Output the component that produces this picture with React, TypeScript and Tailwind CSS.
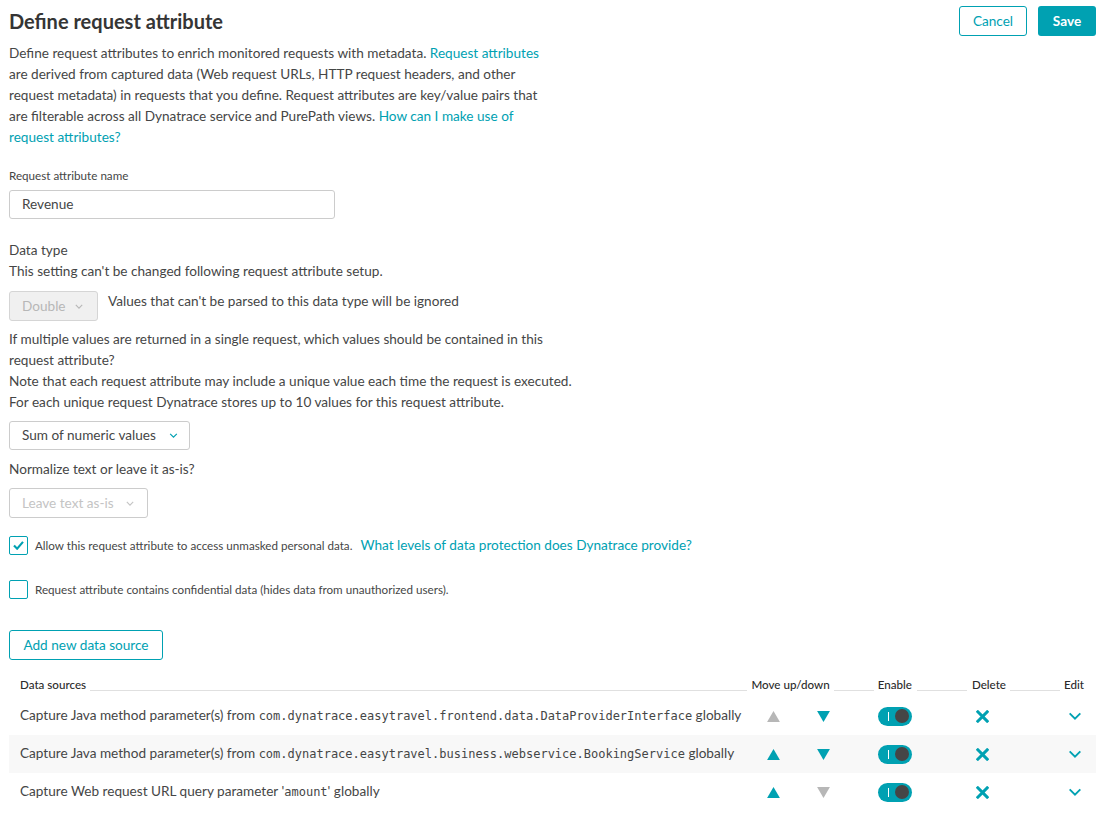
import React from "react";

const teal = "#00a1b2";

function Chevron({ className = "" }: { className?: string }) {
  return (
    <svg viewBox="0 0 10 6" className={className} fill="none" stroke="currentColor" strokeWidth="1.4">
      <path d="M1 1l4 4 4-4" />
    </svg>
  );
}

function Triangle({ up, active }: { up: boolean; active: boolean }) {
  return (
    <svg viewBox="0 0 14 12" className="w-[13px] h-[11px]">
      <path d={up ? "M7 0L14 12H0z" : "M0 0h14L7 12z"} fill={active ? teal : "#b7b7b7"} />
    </svg>
  );
}

function Toggle() {
  return (
    <div className="w-[34px] h-[19px] rounded-full bg-[#00a1b2] flex items-center justify-between pl-[10px] pr-[3px]">
      <span className="w-px h-[9px] bg-white" />
      <span className="w-[14px] h-[14px] rounded-full bg-[#454646]" />
    </div>
  );
}

function Cross() {
  return (
    <svg viewBox="0 0 14 14" className="w-[13px] h-[13px]">
      <path d="M2 2l10 10M12 2L2 12" stroke={teal} strokeWidth="3.2" strokeLinecap="square" />
    </svg>
  );
}

type Row = { pre: string; code: string; post: string };

const rows: Row[] = [
  { pre: "Capture Java method parameter(s) from ", code: "com.dynatrace.easytravel.frontend.data.DataProviderInterface", post: " globally" },
  { pre: "Capture Java method parameter(s) from ", code: "com.dynatrace.easytravel.business.webservice.BookingService", post: " globally" },
  { pre: "Capture Web request URL query parameter '", code: "amount", post: "' globally" },
];

const moves = [
  [false, true],
  [true, true],
  [true, false],
];

export default function App() {
  return (
    <div className="min-h-screen bg-white text-[#454646] text-[13.6px] leading-[21px] pl-[9px] pr-[13px]" style={{ fontFamily: "Lato, 'Open Sans', sans-serif" }}>
      <div className="flex items-start justify-between pt-[6px]">
        <h1 className="text-[20px] font-bold leading-[30px] text-[#353535]">Define request attribute</h1>
        <div className="flex gap-[11px]">
          <button className="h-[30px] w-[68px] rounded-[3px] border border-[#00a1b2] text-[#00a1b2]">Cancel</button>
          <button className="h-[30px] w-[58px] rounded-[3px] bg-[#00a1b2] text-white font-bold">Save</button>
        </div>
      </div>

      <p className="mt-[7px] w-[548px]">
        Define request attributes to enrich monitored requests with metadata.{" "}
        <span className="text-[#00a1b2]">Request attributes</span> are derived from captured data (Web request URLs, HTTP request headers, and other request metadata) in requests that you define. Request attributes are key/value pairs that are filterable across all Dynatrace service and PurePath views.{" "}
        <span className="text-[#00a1b2]">How can I make use of request attributes?</span>
      </p>

      <div className="mt-[20px] text-[11.65px] leading-[16px]">Request attribute name</div>
      <div className="mt-[6px] w-[326px] h-[29px] rounded-[3px] border border-[#cccccc] flex items-center px-[12px]">Revenue</div>

      <div className="mt-[21px]">Data type</div>
      <div>This setting can't be changed following request attribute setup.</div>
      <div className="mt-[9px] flex items-start gap-[10px]">
        <div className="w-[89px] h-[30px] rounded-[3px] border border-[#d5d5d5] bg-[#f0f0f0] flex items-center gap-[9px] pl-[12px] text-[#b7b7b7]">
          Double <Chevron className="w-[8px] h-[5px] text-[#b7b7b7]" />
        </div>
        <div>Values that can't be parsed to this data type will be ignored</div>
      </div>

      <p className="mt-[8px] w-[590px]">
        If multiple values are returned in a single request, which values should be contained in this
        <br />
        request attribute?
        <br />
        Note that each request attribute may include a unique value each time the request is executed.
        <br />
        For each unique request Dynatrace stores up to 10 values for this request attribute.
      </p>

      <div className="mt-[8px] w-[181px] h-[29px] rounded-[3px] border border-[#cccccc] flex items-center gap-[13px] pl-[12px]">
        Sum of numeric values <Chevron className="w-[9px] h-[5px] text-[#00a1b2]" />
      </div>

      <div className="mt-[9px]">Normalize text or leave it as-is?</div>
      <div className="mt-[8px] w-[139px] h-[30px] rounded-[3px] border border-[#cccccc] flex items-center gap-[12px] pl-[12px] text-[#c4c4c4]">
        Leave text as-is <Chevron className="w-[8px] h-[5px] text-[#c4c4c4]" />
      </div>

      <div className="mt-[17px] flex items-center">
        <div className="w-[19px] h-[19px] border border-[#00a1b2] rounded-[2px] flex items-center justify-center">
          <svg viewBox="0 0 12 10" className="w-[11px] h-[9px]">
            <path d="M1 5l3.5 3.5L11 1" fill="none" stroke={teal} strokeWidth="2.4" />
          </svg>
        </div>
        <span className="ml-[7px] text-[11.65px]">Allow this request attribute to access unmasked personal data.</span>
        <span className="ml-[8px] text-[#00a1b2]">What levels of data protection does Dynatrace provide?</span>
      </div>

      <div className="mt-[23px] flex items-center">
        <div className="w-[19px] h-[19px] border border-[#00a1b2] rounded-[2px]" />
        <span className="ml-[7px] text-[11.65px]">Request attribute contains confidential data (hides data from unauthorized users).</span>
      </div>

      <button className="mt-[30px] w-[154px] h-[30px] rounded-[3px] border border-[#00a1b2] text-[#00a1b2]">Add new data source</button>

      <div className="mt-[17px] flex items-end text-[11.6px] leading-[16px] text-[#2b2b2b] font-medium pl-[11px]">
        <span>Data sources</span>
        <span className="flex-1 h-px bg-[#e0e0e0] mb-[2px] mx-[4px]" />
        <span>Move up/down</span>
        <span className="w-[40px] h-px bg-[#e0e0e0] mb-[2px] mx-[4px]" />
        <span>Enable</span>
        <span className="w-[50px] h-px bg-[#e0e0e0] mb-[2px] mx-[5px]" />
        <span>Delete</span>
        <span className="w-[50px] h-px bg-[#e0e0e0] mb-[2px] mx-[4px]" />
        <span className="mr-[12px]">Edit</span>
      </div>

      <div className="mt-[4px]">
        {rows.map((r, i) => (
          <div key={i} className={`h-[38px] flex items-center pl-[11px] ${i === 1 ? "bg-[#f8f8f8]" : ""}`}>
            <div className="flex-1 whitespace-nowrap">
              {r.pre}
              <span className="text-[12px]" style={{ fontFamily: "'DejaVu Sans Mono', monospace" }}>{r.code}</span>
              {r.post}
            </div>
            <div className="w-[50px] flex justify-center"><Triangle up active={moves[i][0]} /></div>
            <div className="w-[50px] flex justify-center"><Triangle up={false} active={moves[i][1]} /></div>
            <div className="w-[30px]" />
            <Toggle />
            <div className="w-[40px]" />
            <div className="w-[60px] flex justify-center"><Cross /></div>
            <div className="w-[42px]" />
            <div className="w-[42px] flex justify-center">
              <Chevron className="w-[14px] h-[8px] text-[#00a1b2]" />
            </div>
          </div>
        ))}
      </div>
    </div>
  );
}
